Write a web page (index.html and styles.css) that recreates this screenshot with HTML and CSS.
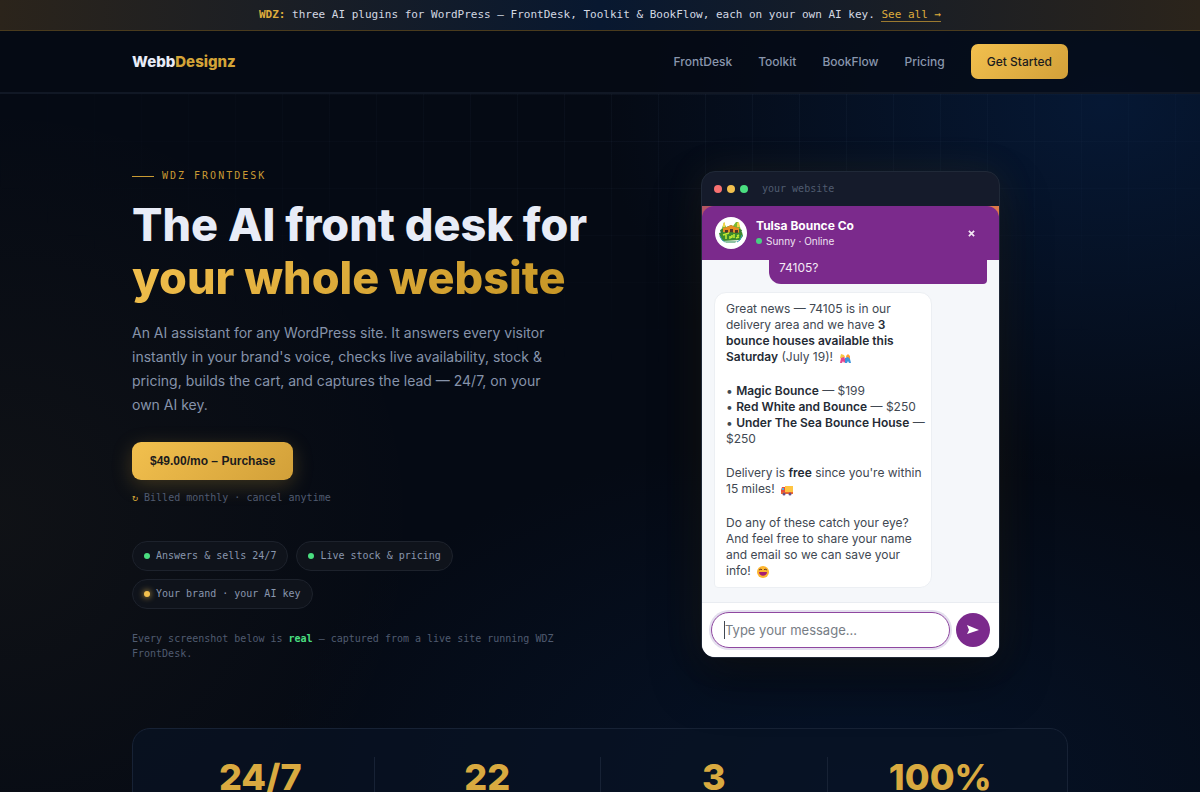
FILE: index.html
```html
<!DOCTYPE html>
<html lang="en">
<head>
<meta charset="utf-8">
<meta name="viewport" content="width=device-width, initial-scale=1">
<title>WebbDesignz – WDZ FrontDesk</title>
<link rel="stylesheet" href="styles.css">
</head>
<body>
<div class="promo"><p><b>WDZ:</b> three AI plugins for WordPress — FrontDesk, Toolkit &amp; BookFlow, each on your own AI key. <a href="#all">See all →</a></p></div>
<header class="site-header">
  <div class="container header-row">
    <a class="logo" href="#home">Webb<span>Designz</span></a>
    <nav class="nav" aria-label="Main">
      <a href="#frontdesk">FrontDesk</a>
      <a href="#toolkit">Toolkit</a>
      <a href="#bookflow">BookFlow</a>
      <a href="#pricing">Pricing</a>
      <a class="nav-cta" href="#start">Get Started</a>
    </nav>
  </div>
</header>
<main class="page">
  <section class="container hero">
    <div class="copy">
      <p class="eyebrow">WDZ FRONTDESK</p>
      <h1>The AI front desk for <span>your whole website</span></h1>
      <p class="lead">An AI assistant for any WordPress site. It answers every visitor instantly in your brand's voice, checks live availability, stock &amp; pricing, builds the cart, and captures the lead — 24/7, on your own AI key.</p>
      <button class="buy" type="button">$49.00/mo – Purchase</button>
      <p class="billing"><span>↻</span> Billed monthly · cancel anytime</p>
      <ul class="pills">
        <li>Answers &amp; sells 24/7</li>
        <li>Live stock &amp; pricing</li>
        <li class="gold">Your brand · your AI key</li>
      </ul>
      <p class="note">Every screenshot below is <b>real</b> — captured from a live site running WDZ FrontDesk.</p>
    </div>
    <div class="demo">
      <div class="window-bar"><i class="red"></i><i class="amber"></i><i class="green"></i><span>your website</span></div>
      <div class="chat">
        <div class="chat-head">
          <svg class="avatar" viewBox="0 0 34 34" aria-hidden="true">
            <circle cx="17" cy="17" r="16" fill="#fff"/>
            <path d="M8 12l2-6 2 5 3-1 4 0 3-4 2 0 2 5 1 3H7z" fill="#79b832"/>
            <path d="M9 8l2-2v5H9zM23 7l2-1 1 5h-3z" fill="#f1d449"/>
            <path d="M6 14l7-3 4-2 4 2 7 3-1 4H7z" fill="#397b35"/>
            <path d="M9 12l4-1 4-2 4 2 4 1v5H9z" fill="#e78c23"/>
            <path d="M11 14h3v3h-3zM16 13h3v4h-3zM21 14h3v3h-3z" fill="#543626"/>
            <path d="M5 17l5-1 3 1 4-1 5 1 6-1 1 4-3 4-17 1-3-4z" fill="#3b8a2d"/>
            <path d="M9 19l6-2M12 18v5M16 20v2l2-1v-2M20 18v4M23 20l2-1M22 22l3-1" stroke="#bde934" stroke-width="1.6" fill="none"/>
            <path d="M6 20l2 4 3 2M28 19l-2 5-3 2" stroke="#3b9cb5" fill="none"/>
            <path d="M10 25h13l-2 2h-9z" fill="#8fc3a3"/>
          </svg>
          <div class="chat-title"><strong>Tulsa Bounce Co</strong><small>Sunny · Online</small></div>
          <button class="close" type="button" aria-label="Close chat"><svg viewBox="0 0 8 8"><path d="M1 1l6 6M7 1L1 7"/></svg></button>
        </div>
        <div class="messages">
          <p class="sent">74105?</p>
          <div class="received">
            <p>Great news — 74105 is in our delivery area and we have <b>3 bounce houses available this Saturday</b> (July 19)!
              <svg class="emoji" viewBox="0 0 12 12" aria-hidden="true"><path d="M1 6l1-4 3 1 1 2-2 3z" fill="#f8c642"/><path d="M7 4l2-2 2 2v3l-3 1z" fill="#ff9e30"/><path d="M1 11l1-5 3-1 2 4-2 2-1-2-1 2z" fill="#e34590"/><path d="M6 6l3-1 2 2 1 4h-2L9 9l-1 2H6z" fill="#3d94dc"/></svg></p>
            <p>• <b>Magic Bounce</b> — $199<br>• <b>Red White and Bounce</b> — $250<br>• <b>Under The Sea Bounce House</b> — $250</p>
            <p>Delivery is <b>free</b> since you're within 15 miles!
              <svg class="emoji" viewBox="0 0 12 12" aria-hidden="true"><path d="M0 6l1-3h3v6H0z" fill="#e94e3d"/><path d="M1 4h2v2H1z" fill="#4dabe0"/><path d="M4 2h8v6H4z" fill="#ffc542"/><path d="M0 8h12v2H0z" fill="#ed6a31"/><circle cx="3" cy="10" r="1.5" fill="#6b4f85"/><circle cx="9" cy="10" r="1.5" fill="#6b4f85"/></svg></p>
            <p>Do any of these catch your eye? And feel free to share your name and email so we can save your info!
              <svg class="emoji" viewBox="0 0 12 12" aria-hidden="true"><circle cx="6" cy="6" r="6" fill="#fdb52e"/><path d="M2 4l2-1 1 1M7 4l1-1 2 1" stroke="#6b3d20" fill="none"/><path d="M2 6h8c0 5-8 5-8 0z" fill="#a51f73"/></svg></p>
          </div>
        </div>
        <form class="composer">
          <input type="text" placeholder="Type your message..." aria-label="Type your message">
          <button type="button" aria-label="Send"><svg viewBox="0 0 12 10"><path d="M0 0l12 5-12 4 2-4z"/></svg></button>
        </form>
      </div>
    </div>
  </section>
  <section class="container stats" aria-label="Key figures">
    <div>24/7</div><div>22</div><div>3</div><div>100%</div>
  </section>
</main>
</body>
</html>
```
FILE: styles.css
```css
* { box-sizing: border-box; }

html { overflow: hidden; background: #050a14; }

body {
  margin: 0;
  height: 100vh;
  overflow: hidden;
  color: #e8ecf7;
  font-family: Inter, sans-serif;
  background:
    radial-gradient(ellipse 500px 380px at 92% 13%, #061834, transparent),
    radial-gradient(ellipse 600px 360px at 72% 100%, #061834a0, transparent),
    radial-gradient(ellipse 420px 420px at 0 66%, #d4a0370d, transparent),
    #050a14;
}

p, h1, ul { margin: 0; padding: 0; }
a { color: inherit; text-decoration: none; }
button, input { font: inherit; }

.container { width: 78%; margin: 0 auto; }

.promo {
  padding: 7px 16px;
  border-bottom: 1px solid #4a3b1d;
  background: linear-gradient(90deg, #2b241b, #07183200 50%, #2b241b), #081830;
  color: #d3d8e2;
  text-align: center;
  font: 11px/16px "DejaVu Sans Mono", monospace;
}
.promo b, .promo a { color: #dfac3c; }
.promo a { border-bottom: 1px solid #9b7930; }

.site-header { border-bottom: 2px solid #111825; background: #050a14b3; }
.header-row {
  display: flex;
  align-items: center;
  justify-content: space-between;
  padding: 13px 0;
}
.logo { font-size: 15px; font-weight: 800; line-height: 24px; }
.logo span { color: #d4a437; }
.nav {
  display: flex;
  align-items: center;
  gap: 26px;
  color: #8996ad;
  font-size: 12px;
  font-weight: 500;
  line-height: 19px;
}
.nav-cta {
  padding: 8px 16px;
  border-radius: 7px;
  background: linear-gradient(135deg, #f2c04e, #d2a039);
  color: #1b1b1d;
}

.page { position: relative; isolation: isolate; }
.page::before {
  content: "";
  position: absolute;
  inset: 0;
  z-index: -1;
  background:
    linear-gradient(90deg, #9ab4e00c 1px, transparent 1px) 0 0 / 47px 47px,
    linear-gradient(#9ab4e00c 1px, transparent 1px) 0 0 / 47px 47px;
  mask-image: radial-gradient(ellipse 800px 280px at 60% 0, #000, transparent);
}

.hero {
  display: grid;
  grid-template-columns: 455px 299px;
  justify-content: space-between;
  align-items: center;
  padding: 74px 68px 67px 0;
}
.eyebrow {
  display: flex;
  align-items: center;
  gap: 8px;
  color: #c99a33;
  font: 10px/16px "DejaVu Sans Mono", monospace;
  letter-spacing: 2px;
}
.eyebrow::before { content: ""; width: 22px; height: 1px; background: #c99a33; }
h1 {
  margin-top: 14px;
  font-size: 45px;
  font-weight: 800;
  line-height: 53px;
  white-space: nowrap;
}
h1 span {
  display: block;
  width: max-content;
  background: linear-gradient(135deg, #f2c04e, #c69525);
  background-clip: text;
  color: transparent;
}
.lead {
  width: 430px;
  margin-top: 17px;
  color: #8693aa;
  font-size: 14px;
  line-height: 24px;
}
.buy {
  display: block;
  margin-top: 25px;
  padding: 11px 18px;
  border: 0;
  border-radius: 9px;
  background: linear-gradient(135deg, #f2c04e, #d2a039);
  box-shadow: 0 5px 20px #d4a43740;
  color: #1b1b1d;
  font: bold 12px/16px "Liberation Sans", sans-serif;
}
.billing {
  margin-top: 10px;
  color: #505b70;
  font: 10px/16px "DejaVu Sans Mono", monospace;
}
.billing span { color: #d4a437; }
.pills {
  display: flex;
  flex-wrap: wrap;
  gap: 8px;
  margin-top: 35px;
  list-style: none;
  color: #8996ad;
  font: 10px/16px "DejaVu Sans Mono", monospace;
}
.pills li {
  display: flex;
  align-items: center;
  gap: 6px;
  padding: 6px 11px;
  border: 1px solid #1d222c;
  border-radius: 16px;
  background: #0f131b;
}
.pills li::before {
  content: "";
  width: 6px;
  height: 6px;
  border-radius: 50%;
  background: #4ade80;
}
.pills .gold::before { background: #f2c04e; box-shadow: 0 0 6px #f2c04e; }
.note {
  margin-top: 22px;
  color: #505b70;
  font: 10px/15px "DejaVu Sans Mono", monospace;
}
.note b { color: #4ade80; }

.demo {
  overflow: hidden;
  border: 1px solid #202938;
  border-radius: 14px;
  background: #151b2b;
  box-shadow: 0 24px 50px #0006, 0 0 40px #d4a43718;
}
.window-bar {
  display: flex;
  align-items: center;
  gap: 5px;
  height: 34px;
  padding: 0 12px;
  color: #505b70;
  font: 10px/16px "DejaVu Sans Mono", monospace;
}
.window-bar i { width: 8px; height: 8px; border-radius: 50%; }
.window-bar span { margin-left: 9px; }
.red { background: #f87171; }
.amber { background: #f2c04e; }
.green { background: #4ade80; }

.chat {
  background: linear-gradient(90deg, #b45663, #df7949) 0 0 / 100% 20px no-repeat, #f5f7fa;
  color: #414852;
}
.chat-head {
  display: flex;
  align-items: center;
  gap: 8px;
  padding: 10px 24px 10px 12px;
  border-radius: 12px 12px 0 0;
  background: #7b2a8c;
  color: #fff;
}
.avatar { width: 34px; height: 34px; }
.chat-title { flex: 1; display: flex; flex-direction: column; }
.chat-title strong { font-size: 12px; line-height: 16px; }
.chat-title small { display: flex; align-items: center; gap: 4px; font-size: 10px; line-height: 14px; color: #eee0f1; }
.chat-title small::before { content: ""; width: 6px; height: 6px; border-radius: 50%; background: #49cf83; }
.close { display: flex; padding: 0; border: 0; background: none; }
.close svg { width: 7px; height: 7px; stroke: #f1e6f3; stroke-width: 2; }

.messages {
  display: flex;
  flex-direction: column;
  gap: 8px;
  padding: 0 12px 14px;
  font-size: 12px;
  line-height: 16px;
}
.sent {
  align-self: flex-end;
  width: 218px;
  padding: 0 10px 8px;
  border-radius: 0 0 4px 12px;
  background: #7b2a8c;
  color: #f3e9f5;
}
.received {
  display: flex;
  flex-direction: column;
  gap: 18px;
  width: 218px;
  padding: 8px 4px 8px 11px;
  border: 1px solid #eceff3;
  border-radius: 12px 12px 12px 4px;
  background: #fff;
}
.received b { color: #252b35; font-weight: 600; }
.emoji { width: 12px; height: 12px; margin-left: 3px; vertical-align: -3px; }

.composer {
  display: flex;
  align-items: center;
  gap: 6px;
  padding: 9px;
  border-top: 1px solid #e9ecf1;
  background: #fff;
}
.composer input {
  flex: 1;
  min-width: 0;
  height: 36px;
  padding: 0 13px;
  border: 1px solid #8f48a0;
  border-radius: 18px;
  outline: none;
  background: linear-gradient(#414852, #414852) 12px center / 1px 18px no-repeat #fff;
  box-shadow: 0 0 0 2px #e4dfee;
  font-size: 13px;
}
.composer input::placeholder { color: #777d85; opacity: 1; }
.composer button {
  display: grid;
  place-items: center;
  width: 34px;
  height: 34px;
  padding: 0;
  border: 0;
  border-radius: 50%;
  background: #7b2a8c;
}
.composer svg { width: 12px; height: 10px; fill: #fff; }

.stats {
  display: grid;
  grid-template-columns: repeat(4, 1fr);
  padding: 28px 14px;
  border: 1px solid #172235;
  border-radius: 18px;
  background: #081324b0;
}
.stats div {
  padding: 0 8px;
  color: #d9aa40;
  font-size: 36px;
  font-weight: 800;
  line-height: 40px;
  text-align: center;
}
.stats div + div { border-left: 1px solid #172235; }
```
